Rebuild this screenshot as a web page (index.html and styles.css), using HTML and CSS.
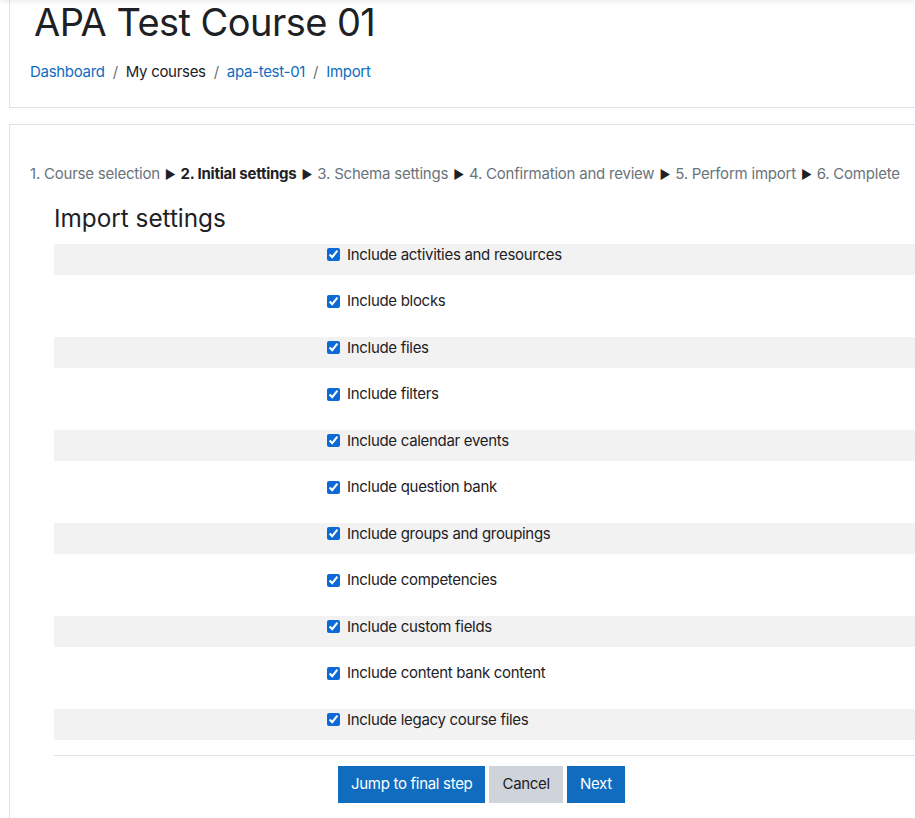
FILE: index.html
```html
<!DOCTYPE html>
<html lang="en">
<head>
<meta charset="utf-8">
<title>APA Test Course 01: Import</title>
<link rel="stylesheet" href="styles.css">
</head>
<body>
<div class="nav-shadow"></div>
<div class="page">
  <header class="card header-card">
    <h1 class="course-title">APA Test Course 01</h1>
    <nav class="breadcrumb">
      <a href="#">Dashboard</a><span class="sep">/</span><span class="crumb">My courses</span><span class="sep">/</span><a href="#">apa-test-01</a><span class="sep">/</span><a href="#">Import</a>
    </nav>
  </header>
  <main class="card main-card">
    <div class="steps">
      <span>1. Course selection</span><span class="arrow">&#9654;</span><strong>2. Initial settings</strong><span class="arrow">&#9654;</span><span>3. Schema settings</span><span class="arrow">&#9654;</span><span>4. Confirmation and review</span><span class="arrow">&#9654;</span><span>5. Perform import</span><span class="arrow">&#9654;</span><span>6. Complete</span>
    </div>
    <form class="settings">
      <h2 class="legend">Import settings</h2>
      <div class="row"><div></div><label><input type="checkbox" checked> Include activities and resources</label></div>
      <div class="row"><div></div><label><input type="checkbox" checked> Include blocks</label></div>
      <div class="row"><div></div><label><input type="checkbox" checked> Include files</label></div>
      <div class="row"><div></div><label><input type="checkbox" checked> Include filters</label></div>
      <div class="row"><div></div><label><input type="checkbox" checked> Include calendar events</label></div>
      <div class="row"><div></div><label><input type="checkbox" checked> Include question bank</label></div>
      <div class="row"><div></div><label><input type="checkbox" checked> Include groups and groupings</label></div>
      <div class="row"><div></div><label><input type="checkbox" checked> Include competencies</label></div>
      <div class="row"><div></div><label><input type="checkbox" checked> Include custom fields</label></div>
      <div class="row"><div></div><label><input type="checkbox" checked> Include content bank content</label></div>
      <div class="row"><div></div><label><input type="checkbox" checked> Include legacy course files</label></div>
      <hr class="divider">
      <div class="buttons">
        <button type="button" class="btn primary">Jump to final step</button>
        <button type="button" class="btn secondary">Cancel</button>
        <button type="button" class="btn primary">Next</button>
      </div>
    </form>
  </main>
</div>
</body>
</html>
```
FILE: styles.css
```css
html, body {
  margin: 0;
  padding: 0;
  overflow: hidden;
  background: #fff;
}
body {
  font-family: Inter, "Noto Sans", "Liberation Sans", sans-serif;
  font-size: 15px;
  line-height: 1.5;
  letter-spacing: -0.3px;
  color: #1d2125;
}
.nav-shadow {
  position: fixed;
  top: -10px;
  left: 0;
  right: 0;
  height: 10px;
  box-shadow: 0 2px 4px rgba(0,0,0,0.08);
  background: #fff;
  z-index: 5;
}
.page {
  padding-left: 9px;
  width: 1200px;
}
.card {
  border: 1px solid #dee2e6;
  background: #fff;
}
.header-card {
  border-top: none;
  padding: 0 20px 23px 20px;
}
.course-title {
  margin: 0;
  padding-left: 4px;
  font-size: 38px;
  font-weight: 400;
  line-height: 45px;
  letter-spacing: -0.55px;
  color: #1d2125;
}
.breadcrumb {
  margin-top: 16px;
  line-height: 22.5px;
}
.breadcrumb a {
  color: #0f6cbf;
  text-decoration: none;
}
.breadcrumb .sep {
  color: #6a737b;
  padding: 0 8px;
}
.main-card {
  margin-top: 16px;
  padding: 20px 20px 20px 20px;
}
.steps {
  margin-top: 18px;
  color: #6a737b;
  line-height: 22.5px;
  letter-spacing: -0.22px;
  white-space: nowrap;
}
.steps strong {
  color: #1d2125;
  font-weight: 700;
}
.steps .arrow {
  color: #1d2125;
  font-size: 12px;
  padding: 0 5px;
}
.settings {
  margin-left: 24px;
}
.legend {
  margin: 19px 0 11.5px 0;
  font-size: 24.3px;
  font-weight: 400;
  line-height: 27px;
  letter-spacing: 0;
}
.row {
  display: grid;
  grid-template-columns: 273px 1fr;
  height: 31px;
  margin-bottom: 15.5px;
  box-sizing: border-box;
}
.row:nth-of-type(odd) {
  background: #f2f2f2;
}
.row label {
  display: flex;
  align-items: center;
  height: 22.5px;
  gap: 7px;
}
.row input {
  margin: 0;
  width: 13px;
  height: 13px;
  accent-color: #0b6ad6;
}
.divider {
  margin: 0 0 10px 0;
  border: none;
  border-top: 1px solid #dee2e6;
}
.buttons {
  display: flex;
  gap: 4px;
  padding-left: 284px;
}
.btn {
  font-family: inherit;
  font-size: 15px;
  line-height: 22.5px;
  letter-spacing: -0.3px;
  padding: 6px 12px;
  border: 1px solid transparent;
  border-radius: 0;
  cursor: pointer;
}
.btn.primary {
  background: #0f6cbf;
  color: #fff;
}
.btn.secondary {
  background: #ced4da;
  color: #1d2125;
}
```
